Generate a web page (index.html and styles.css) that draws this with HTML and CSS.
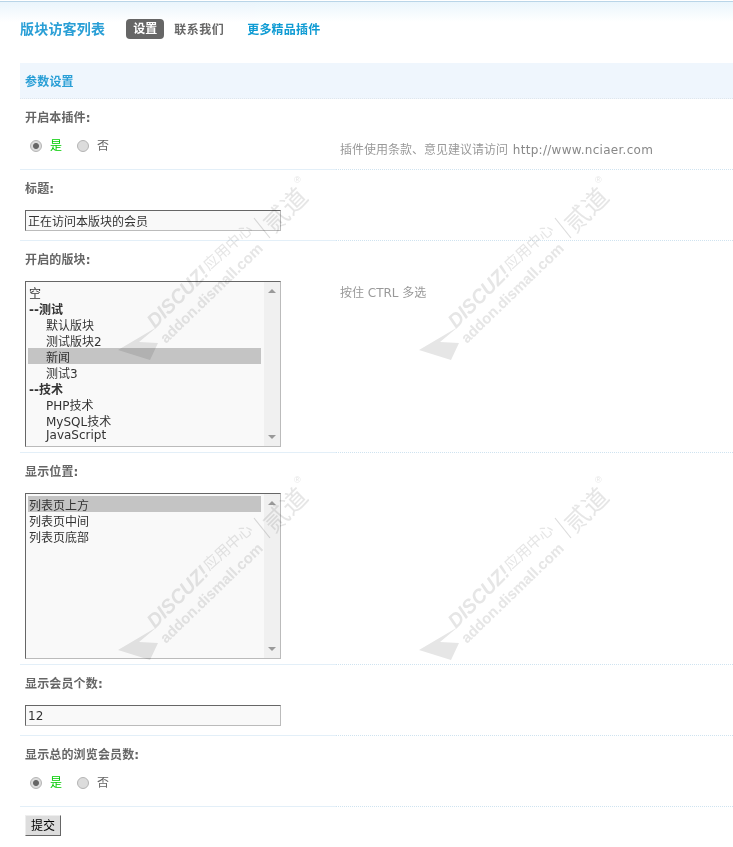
FILE: index.html
```html
<!DOCTYPE html>
<html lang="zh-CN">
<head>
<meta charset="utf-8">
<title>版块访客列表</title>
<link rel="stylesheet" href="styles.css">
</head>
<body>
<header class="nav">
  <h1 class="nav-title">版块访客列表</h1>
  <a class="nav-pill">设置</a>
  <a class="nav-link">联系我们</a>
  <a class="nav-more">更多精品插件</a>
</header>

<form class="panel">
  <h2 class="panel-head">参数设置</h2>

  <div class="field">
    <div class="field-label">开启本插件:</div>
    <div class="field-row">
      <div class="field-main radios">
        <label class="radio"><input type="radio" name="on" checked><span class="yes">是</span></label>
        <label class="radio"><input type="radio" name="on"><span>否</span></label>
      </div>
      <div class="field-note">插件使用条款、意见建议请访问 <a class="note-link">http://www.nciaer.com</a></div>
    </div>
  </div>

  <div class="field">
    <div class="field-label">标题:</div>
    <div class="field-row">
      <div class="field-main pad-input"><input class="text" type="text" value="正在访问本版块的会员"></div>
      <div class="field-note"></div>
    </div>
  </div>

  <div class="field">
    <div class="field-label">开启的版块:</div>
    <div class="field-row">
      <div class="field-main pad-select">
        <div class="list-wrap">
          <select class="list" multiple>
            <option>空</option>
            <option class="group">--测试</option>
            <option class="child">默认版块</option>
            <option class="child">测试版块2</option>
            <option class="child" selected>新闻</option>
            <option class="child">测试3</option>
            <option class="group">--技术</option>
            <option class="child">PHP技术</option>
            <option class="child">MySQL技术</option>
            <option class="child latin">JavaScript</option>
          </select>
          <span class="scrollbar"></span>
        </div>
      </div>
      <div class="field-note note-tall">按住 CTRL 多选</div>
    </div>
  </div>

  <div class="field">
    <div class="field-label">显示位置:</div>
    <div class="field-row">
      <div class="field-main pad-select">
        <div class="list-wrap">
          <select class="list" multiple>
            <option selected>列表页上方</option>
            <option>列表页中间</option>
            <option>列表页底部</option>
          </select>
          <span class="scrollbar"></span>
        </div>
      </div>
      <div class="field-note"></div>
    </div>
  </div>

  <div class="field">
    <div class="field-label">显示会员个数:</div>
    <div class="field-row">
      <div class="field-main pad-input"><input class="text" type="text" value="12"></div>
      <div class="field-note"></div>
    </div>
  </div>

  <div class="field">
    <div class="field-label">显示总的浏览会员数:</div>
    <div class="field-row">
      <div class="field-main radios">
        <label class="radio"><input type="radio" name="total" checked><span class="yes">是</span></label>
        <label class="radio"><input type="radio" name="total"><span>否</span></label>
      </div>
      <div class="field-note"></div>
    </div>
  </div>

  <div class="actions"><button class="submit" type="button">提交</button></div>
</form>

<div class="watermarks" aria-hidden="true">
  <svg class="mark m1" viewBox="0 0 184 184">
    <polygon points="0,172 39,149 21,164 40,165 32,182"/>
    <text class="wm-discuz" transform="translate(37,151) rotate(-45)" textLength="78" lengthAdjust="spacingAndGlyphs">DISCUZ!</text>
    <text class="wm-cn" transform="translate(91,93) rotate(-42)" textLength="60">应用中心</text>
    <text class="wm-addon" transform="translate(48,166) rotate(-44)" textLength="136" lengthAdjust="spacingAndGlyphs">addon.dismall.com</text>
    <line class="wm-line" x1="136" y1="40" x2="152" y2="60"/>
    <text class="wm-brand" transform="translate(156,56) rotate(-45)">贰道</text>
    <text class="wm-reg" x="176" y="5">®</text>
  </svg>
  <svg class="mark m2" viewBox="0 0 184 184">
    <polygon points="0,172 39,149 21,164 40,165 32,182"/>
    <text class="wm-discuz" transform="translate(37,151) rotate(-45)" textLength="78" lengthAdjust="spacingAndGlyphs">DISCUZ!</text>
    <text class="wm-cn" transform="translate(91,93) rotate(-42)" textLength="60">应用中心</text>
    <text class="wm-addon" transform="translate(48,166) rotate(-44)" textLength="136" lengthAdjust="spacingAndGlyphs">addon.dismall.com</text>
    <line class="wm-line" x1="136" y1="40" x2="152" y2="60"/>
    <text class="wm-brand" transform="translate(156,56) rotate(-45)">贰道</text>
    <text class="wm-reg" x="176" y="5">®</text>
  </svg>
  <svg class="mark m3" viewBox="0 0 184 184">
    <polygon points="0,172 39,149 21,164 40,165 32,182"/>
    <text class="wm-discuz" transform="translate(37,151) rotate(-45)" textLength="78" lengthAdjust="spacingAndGlyphs">DISCUZ!</text>
    <text class="wm-cn" transform="translate(91,93) rotate(-42)" textLength="60">应用中心</text>
    <text class="wm-addon" transform="translate(48,166) rotate(-44)" textLength="136" lengthAdjust="spacingAndGlyphs">addon.dismall.com</text>
    <line class="wm-line" x1="136" y1="40" x2="152" y2="60"/>
    <text class="wm-brand" transform="translate(156,56) rotate(-45)">贰道</text>
    <text class="wm-reg" x="176" y="5">®</text>
  </svg>
  <svg class="mark m4" viewBox="0 0 184 184">
    <polygon points="0,172 39,149 21,164 40,165 32,182"/>
    <text class="wm-discuz" transform="translate(37,151) rotate(-45)" textLength="78" lengthAdjust="spacingAndGlyphs">DISCUZ!</text>
    <text class="wm-cn" transform="translate(91,93) rotate(-42)" textLength="60">应用中心</text>
    <text class="wm-addon" transform="translate(48,166) rotate(-44)" textLength="136" lengthAdjust="spacingAndGlyphs">addon.dismall.com</text>
    <line class="wm-line" x1="136" y1="40" x2="152" y2="60"/>
    <text class="wm-brand" transform="translate(156,56) rotate(-45)">贰道</text>
    <text class="wm-reg" x="176" y="5">®</text>
  </svg>
</div>
</body>
</html>
```
FILE: styles.css
```css
* { box-sizing: border-box; }

html, body { margin: 0; padding: 0; }

body {
  position: relative;
  min-height: 847px;
  overflow: hidden;
  padding: 1px 0 0 20px;
  background: #fff linear-gradient(#eaf5fc, #fff) no-repeat 0 2px / 100% 20px;
  font: 12px/16px "DejaVu Sans", "Noto Sans CJK SC", sans-serif;
  color: #666;
}

body::before {
  content: "";
  position: absolute;
  left: 0;
  right: 0;
  top: 1px;
  height: 1px;
  background: #b9d5e8;
}

/* navigation */
.nav {
  display: flex;
  align-items: center;
  height: 62px;
  padding-bottom: 6px;
  font-weight: bold;
}

.nav-title {
  margin: 0 21px 0 0;
  font-size: 14px;
  font-weight: bold;
  letter-spacing: .2px;
  color: #2a9fd6;
}

.nav-pill {
  width: 38px;
  height: 20px;
  line-height: 21px;
  text-align: center;
  color: #fff;
  background: #666;
  border-radius: 4px;
  margin-right: 10px;
}

.nav-link {
  margin-right: 23px;
  padding-top: 1px;
  letter-spacing: .5px;
  color: #666;
}

.nav-more { padding-top: 1px; letter-spacing: .2px; color: #0f9bd3; }

/* panel */
.panel-head {
  margin: 0;
  height: 36px;
  padding: 11px 5px 0;
  font-size: 12px;
  line-height: 16px;
  letter-spacing: .2px;
  color: #2a9fd6;
  background: #eff6fd;
  border-bottom: 1px dotted #dfe6ec;
}

.field-label {
  height: 40px;
  padding: 11px 5px 0;
  font-weight: bold;
  letter-spacing: .15px;
  color: #666;
}

.field-row {
  display: grid;
  grid-template-columns: 316px 1fr;
}

.field-main { border-bottom: 1px solid #e3eff8; padding-left: 5px; }

.field-note {
  border-bottom: 1px dotted #cfe3f0;
  padding: 3px 0 0 0;
  text-indent: 4px;
  color: #999;
}

.note-tall { padding-top: 4px; }

.note-link { margin-left: 1px; letter-spacing: .28px; color: #888; }

.radios {
  display: flex;
  height: 31px;
  padding: 0 0 0 10px;
  gap: 15px;
}

.radio {
  display: flex;
  gap: 8px;
  height: 16px;
  margin-top: -1px;
  align-items: center;
}

.radio input {
  appearance: none;
  width: 12px;
  height: 12px;
  margin: 0;
  border: 1px solid #b4b4b4;
  border-radius: 50%;
  background: #dcdcdc;
}

.radio input:checked {
  background: radial-gradient(circle, #666 0, #666 2.5px, #dcdcdc 3.5px);
}

.yes { color: #0c0; }

.pad-input { height: 31px; }
.pad-select { height: 172px; }

.text {
  display: block;
  width: 256px;
  height: 21px;
  margin: 0;
  padding: 0 2px;
  border: 1px solid;
  border-color: #666 #bbb #bbb #666;
  background: #f9f9f9;
  font: inherit;
  color: #333;
  border-radius: 0;
}

.list-wrap { position: relative; width: 256px; height: 166px; }

.list {
  display: block;
  width: 256px;
  height: 166px;
  margin: 0;
  padding: 2px 19px 2px 2px;
  border: 1px solid;
  border-color: #666 #bbb #bbb #666;
  border-radius: 0;
  background: #f9f9f9;
  font: inherit;
  color: #333;
  overflow: hidden;
  outline: 0;
}

.list option {
  display: block;
  min-height: 16px;
  height: 16px;
  padding: 0 1px;
  line-height: 14px;
  color: #333;
}

.list option.group { font-weight: bold; }
.list option.child { padding-left: 18px; }
.list option.latin { line-height: 18px; }

.list option:checked {
  background: #c4c4c4 linear-gradient(#c4c4c4, #c4c4c4);
  color: #333;
}

/* scrollbar painted over the list */
.scrollbar {
  position: absolute;
  top: 1px;
  right: 1px;
  bottom: 1px;
  width: 16px;
  background: #f0f0f0;
}

.scrollbar::before,
.scrollbar::after {
  content: "";
  position: absolute;
  left: 4px;
  border: 4px solid transparent;
  border-top: 0;
  border-bottom: 4px solid #999;
}

.scrollbar::before { top: 7px; }

.scrollbar::after {
  bottom: 7px;
  border-top: 4px solid #999;
  border-bottom: 0;
}

.actions { padding: 8px 0 0 5px; }

.submit {
  display: block;
  width: 36px;
  height: 21px;
  padding: 0;
  border: 1px solid;
  border-color: #eee #666 #666 #eee;
  background: #ddd;
  font: inherit;
  color: #000;
  border-radius: 0;
}

/* watermark overlay */
.watermarks {
  position: absolute;
  inset: 0;
  pointer-events: none;
  mix-blend-mode: multiply;
}

.mark {
  position: absolute;
  width: 184px;
  height: 184px;
  overflow: visible;
  fill: #e6e6e6;
}

.m1 { left: 118px; top: 178px; }
.m2 { left: 419px; top: 178px; }
.m3 { left: 118px; top: 478px; }
.m4 { left: 419px; top: 478px; }

.wm-line { stroke: #dcdcdc; stroke-width: 1.2; }

.wm-discuz { font: italic bold 20px "Liberation Sans", sans-serif; }
.wm-cn { font: 15px "Noto Sans CJK SC", sans-serif; }
.wm-addon { font: bold 15px "Liberation Sans", sans-serif; }
.wm-brand { font: 25px "Noto Sans CJK SC", sans-serif; }
.wm-reg { font: 9px "Liberation Sans", sans-serif; }
```
